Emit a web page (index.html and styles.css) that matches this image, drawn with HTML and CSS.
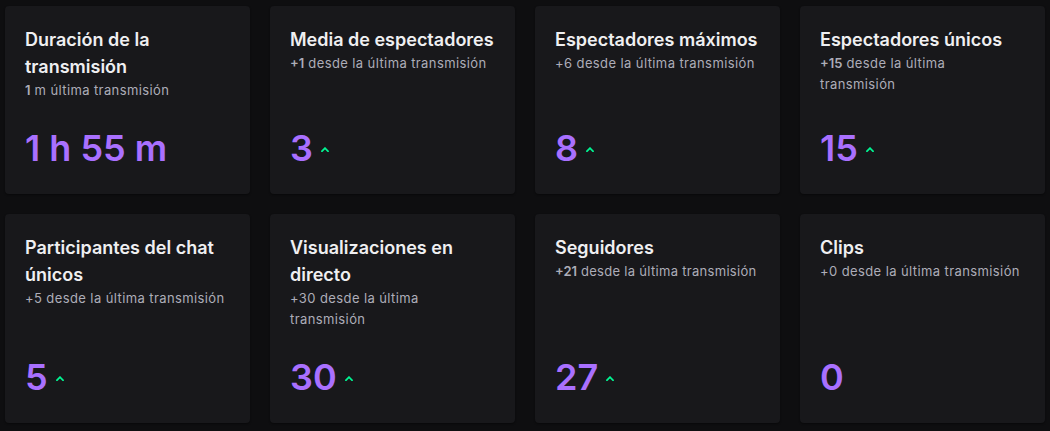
FILE: index.html
```html
<!DOCTYPE html>
<html lang="es">
<head>
<meta charset="utf-8">
<title>Resumen de la transmisión</title>
<link rel="stylesheet" href="styles.css">
</head>
<body>
<main class="stats">
  <section class="card">
    <div class="card-head">
      <h3 class="card-title">Duración de la transmisión</h3>
      <p class="card-sub"><b>1</b> m última transmisión</p>
    </div>
    <div class="card-value"><span class="num">1 h 55 m</span></div>
  </section>
  <section class="card">
    <div class="card-head">
      <h3 class="card-title">Media de espectadores</h3>
      <p class="card-sub"><b>+1</b> desde la última transmisión</p>
    </div>
    <div class="card-value"><span class="num">3</span><svg class="up" viewBox="0 0 8 5"><polyline points="1,4.2 4,1.2 7,4.2"/></svg></div>
  </section>
  <section class="card">
    <div class="card-head">
      <h3 class="card-title">Espectadores máximos</h3>
      <p class="card-sub">+6 desde la última transmisión</p>
    </div>
    <div class="card-value"><span class="num">8</span><svg class="up" viewBox="0 0 8 5"><polyline points="1,4.2 4,1.2 7,4.2"/></svg></div>
  </section>
  <section class="card">
    <div class="card-head">
      <h3 class="card-title">Espectadores únicos</h3>
      <p class="card-sub"><b>+15</b> desde la última transmisión</p>
    </div>
    <div class="card-value"><span class="num">15</span><svg class="up" viewBox="0 0 8 5"><polyline points="1,4.2 4,1.2 7,4.2"/></svg></div>
  </section>
  <section class="card">
    <div class="card-head">
      <h3 class="card-title">Participantes del chat únicos</h3>
      <p class="card-sub">+5 desde la última transmisión</p>
    </div>
    <div class="card-value"><span class="num">5</span><svg class="up" viewBox="0 0 8 5"><polyline points="1,4.2 4,1.2 7,4.2"/></svg></div>
  </section>
  <section class="card">
    <div class="card-head">
      <h3 class="card-title">Visualizaciones en directo</h3>
      <p class="card-sub">+30 desde la última transmisión</p>
    </div>
    <div class="card-value"><span class="num">30</span><svg class="up" viewBox="0 0 8 5"><polyline points="1,4.2 4,1.2 7,4.2"/></svg></div>
  </section>
  <section class="card">
    <div class="card-head">
      <h3 class="card-title">Seguidores</h3>
      <p class="card-sub card-sub--tight"><b>+21</b> desde la última transmisión</p>
    </div>
    <div class="card-value"><span class="num">27</span><svg class="up" viewBox="0 0 8 5"><polyline points="1,4.2 4,1.2 7,4.2"/></svg></div>
  </section>
  <section class="card">
    <div class="card-head">
      <h3 class="card-title">Clips</h3>
      <p class="card-sub">+0 desde la última transmisión</p>
    </div>
    <div class="card-value"><span class="num">0</span></div>
  </section>
</main>
</body>
</html>
```

FILE: styles.css
```css
* {
  box-sizing: border-box;
}

html,
body {
  margin: 0;
  background: #0e0e10;
}

body {
  font-family: Inter, "Noto Sans", "Liberation Sans", sans-serif;
  color: #efeff1;
  padding: 6px 5px 8px;
}

/* 4 x 2 grid of stat cards */
.stats {
  display: grid;
  grid-template-columns: repeat(4, 245px);
  column-gap: 20px;
  row-gap: 20px;
}

.card {
  background: #18181b;
  border-radius: 4px;
  padding: 20px 20px 24px;
  display: flex;
  flex-direction: column;
  box-shadow: 0 1px 2px rgba(0, 0, 0, 0.4);
}

.card-title {
  margin: 0;
  font-size: 18px;
  font-weight: 600;
  line-height: 27px;
  color: #efeff1;
}

.card-sub {
  margin: 0;
  padding-right: 4px;
  font-size: 13px;
  line-height: 21px;
  letter-spacing: 0.4px;
  color: #adadb8;
}

.card-sub b {
  font-weight: 600;
  letter-spacing: 0;
}

/* keeps the short delta line on a single row */
.card-sub--tight {
  padding-right: 0;
  white-space: nowrap;
  letter-spacing: 0.3px;
}

.card-value {
  margin-top: auto;
  padding-top: 25px;
  display: flex;
  align-items: center;
  height: 69px;
}

.num {
  font-size: 36px;
  font-weight: 600;
  line-height: 44px;
  color: #a970ff;
}

.up {
  width: 8px;
  height: 5px;
  margin-left: 8px;
  margin-top: 2px;
  fill: none;
  stroke: #00f593;
  stroke-width: 1.8;
  stroke-linecap: square;
}
```
